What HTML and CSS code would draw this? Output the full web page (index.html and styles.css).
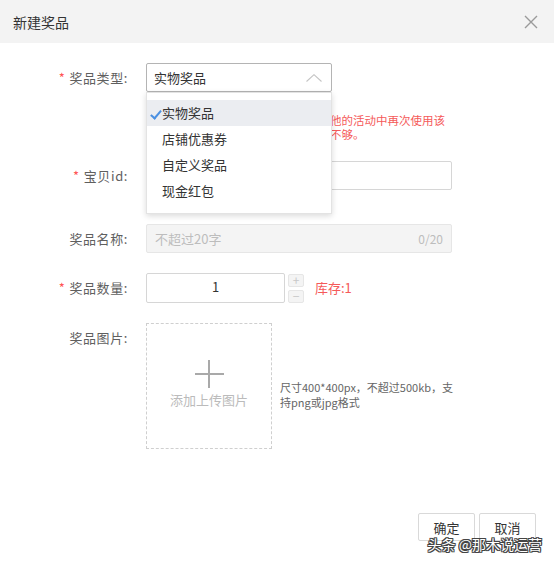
FILE: index.html
```html
<!DOCTYPE html>
<html lang="zh-CN">
  <head>
    <meta charset="UTF-8" />
    <meta name="viewport" content="width=device-width, initial-scale=1.0" />
    <title>新建奖品</title>
    <link rel="stylesheet" href="styles.css">
  </head>
  <body>
    <div class="dialog">
      <div class="dialog-header">
        <span class="dialog-title">新建奖品</span>
        <button type="button" class="dialog-close" aria-label="关闭">
          <svg width="14" height="14" viewBox="0 0 14 14">
            <path d="M1 1L13 13M13 1L1 13" stroke="#9a9a9a" stroke-width="1.4" fill="none" />
          </svg>
        </button>
      </div>

      <form class="prize-form">
        <div class="form-row row-type">
          <label class="form-label required">奖品类型:</label>
          <div class="form-field">
            <div class="select">
              <span class="select-value">实物奖品</span>
              <svg class="select-arrow" width="16" height="8" viewBox="0 0 16 8">
                <path d="M0.5 7.5L8 0.7L15.5 7.5" stroke="#c4c4c4" stroke-width="1.1" fill="none" />
              </svg>
              <ul class="select-menu">
                <li class="select-option selected">实物奖品</li>
                <li class="select-option">店铺优惠券</li>
                <li class="select-option">自定义奖品</li>
                <li class="select-option">现金红包</li>
              </ul>
            </div>
            <p class="field-tip">奖品创建后库存将被锁定，不能在其他的活动中再次使用该奖品，避免出现活动期间的库存数量不够。</p>
          </div>
        </div>

        <div class="form-row row-item">
          <label class="form-label required">宝贝id:</label>
          <div class="form-field">
            <input type="text" class="text-input" />
          </div>
        </div>

        <div class="form-row row-name">
          <label class="form-label">奖品名称:</label>
          <div class="form-field">
            <div class="text-input disabled">
              <span class="placeholder">不超过20字</span>
              <span class="counter">0/20</span>
            </div>
          </div>
        </div>

        <div class="form-row row-count">
          <label class="form-label required">奖品数量:</label>
          <div class="form-field count-field">
            <input type="text" class="text-input count-input" value="1" />
            <div class="stepper">
              <span class="step-btn">+</span>
              <span class="step-btn">−</span>
            </div>
            <span class="stock">库存:1</span>
          </div>
        </div>

        <div class="form-row row-image">
          <label class="form-label">奖品图片:</label>
          <div class="form-field image-field">
            <div class="upload">
              <span class="upload-plus"></span>
              <span class="upload-text">添加上传图片</span>
            </div>
            <p class="upload-hint">尺寸400*400px，不超过500kb，支持png或jpg格式</p>
          </div>
        </div>
      </form>

      <div class="dialog-footer">
        <button type="button" class="btn">确定</button>
        <button type="button" class="btn">取消</button>
      </div>

      <div class="watermark">头条 @那木说运营</div>
    </div>
  </body>
</html>
```

FILE: styles.css
```css
* {
  box-sizing: border-box;
}

body {
  margin: 0;
  font-family: "Noto Sans CJK SC", "Noto Sans", sans-serif;
  color: #333;
  background: #fff;
}

.dialog {
  position: relative;
  display: flex;
  flex-direction: column;
  width: 554px;
  min-height: 563px;
}

.dialog-header {
  display: flex;
  align-items: center;
  justify-content: space-between;
  height: 43px;
  padding: 0 16px 0 13px;
  background-color: #f3f3f3;
}

.dialog-title {
  font-size: 14px;
  color: #333;
}

.dialog-close {
  display: flex;
  padding: 0;
  border: none;
  background: none;
  cursor: pointer;
}

.prize-form {
  padding-top: 20px;
}

.form-row {
  display: grid;
  grid-template-columns: 128px 1fr;
  column-gap: 18px;
  margin-bottom: 20px;
}

.row-item {
  margin-bottom: 34px;
}

.form-label {
  text-align: right;
  font-size: 13px;
  line-height: 29px;
  letter-spacing: 0.6px;
  color: #5f5f5f;
}

.form-label.required::before {
  content: "*";
  margin-right: 4px;
  color: #f55;
}

.form-field {
  position: relative;
  width: 306px;
}

/* select */

.select {
  position: relative;
  display: flex;
  align-items: center;
  justify-content: space-between;
  width: 186px;
  height: 29px;
  padding: 0 8px 0 7px;
  border: 1px solid #b4b4b4;
  border-radius: 2px;
  font-size: 13px;
  color: #333;
}

.select-arrow {
  margin-right: 1px;
}

.select-menu {
  position: absolute;
  top: 28px;
  left: -1px;
  z-index: 10;
  width: 186px;
  margin: 0;
  padding: 7px 0 9px;
  list-style: none;
  background: #fff;
  border: 1px solid #e3e3e3;
  box-shadow: 0 2px 6px rgba(0, 0, 0, 0.15);
}

.select-option {
  position: relative;
  height: 26px;
  padding-left: 15px;
  line-height: 26px;
  font-size: 13px;
  color: #333;
}

.select-option.selected {
  background-color: #ebedf1;
}

.select-option.selected::before {
  content: "";
  position: absolute;
  left: 6px;
  top: 8px;
  width: 4px;
  height: 9px;
  border-right: 2px solid #4a90e2;
  border-bottom: 2px solid #4a90e2;
  transform: rotate(40deg);
}

.field-tip {
  margin: 21px 0 0;
  font-size: 11.5px;
  line-height: 14px;
  color: #f55a5a;
}

/* inputs */

.text-input {
  display: flex;
  align-items: center;
  justify-content: space-between;
  width: 306px;
  height: 29px;
  padding: 0 8px;
  border: 1px solid #d6d6d6;
  border-radius: 2px;
  font-family: inherit;
  font-size: 13px;
  color: #333;
  outline: none;
}

.text-input.disabled {
  background-color: #f4f4f4;
  border-color: #e6e6e6;
}

.placeholder {
  color: #bdbdbd;
}

.counter {
  font-size: 12px;
  color: #bdbdbd;
}

.count-field {
  display: flex;
  align-items: center;
}

.count-input {
  width: 139px;
  height: 30px;
  padding-bottom: 3px;
  text-align: center;
}

.stepper {
  display: flex;
  flex-direction: column;
  gap: 3px;
  margin-left: 3px;
}

.step-btn {
  display: flex;
  align-items: center;
  justify-content: center;
  width: 16px;
  height: 13px;
  border: 1px solid #e6e6e6;
  border-radius: 2px;
  background-color: #f4f4f4;
  font-size: 12px;
  line-height: 1;
  color: #c8c8c8;
}

.stock {
  margin: 0 0 2px 11px;
  font-size: 13px;
  color: #f55a5a;
}

/* upload */

.image-field {
  display: flex;
  align-items: center;
  width: auto;
}

.upload {
  display: flex;
  flex-direction: column;
  align-items: center;
  flex-shrink: 0;
  width: 126px;
  height: 126px;
  padding-top: 36px;
  border: 1px dashed #cfcfcf;
}

.upload-plus {
  position: relative;
  width: 29px;
  height: 28px;
}

.upload-plus::before,
.upload-plus::after {
  content: "";
  position: absolute;
  background-color: #a9a9a9;
}

.upload-plus::before {
  left: 0;
  right: 0;
  top: 13px;
  height: 2px;
}

.upload-plus::after {
  top: 0;
  bottom: 0;
  left: 13px;
  width: 2px;
}

.upload-text {
  margin-top: 2px;
  font-size: 13px;
  color: #bbb;
}

.upload-hint {
  flex-shrink: 0;
  width: 180px;
  margin: 17px 0 0 8px;
  font-size: 11px;
  line-height: 15px;
  color: #666;
}

/* footer */

.dialog-footer {
  display: flex;
  justify-content: flex-end;
  gap: 4px;
  margin-top: auto;
  padding: 0 18px 22px 0;
}

.btn {
  width: 57px;
  height: 28px;
  padding: 0;
  border: 1px solid #d9d9d9;
  border-radius: 2px;
  background: #fff;
  font-family: inherit;
  font-size: 13px;
  color: #333;
  cursor: pointer;
}

.watermark {
  position: absolute;
  right: 12px;
  bottom: 9px;
  font-size: 14px;
  color: #fff;
  text-shadow: 1px 0 #444, -1px 0 #444, 0 1px #444, 0 -1px #444, 1px 1px #444, -1px -1px #444, 1px -1px #444, -1px 1px #444;
}
```
